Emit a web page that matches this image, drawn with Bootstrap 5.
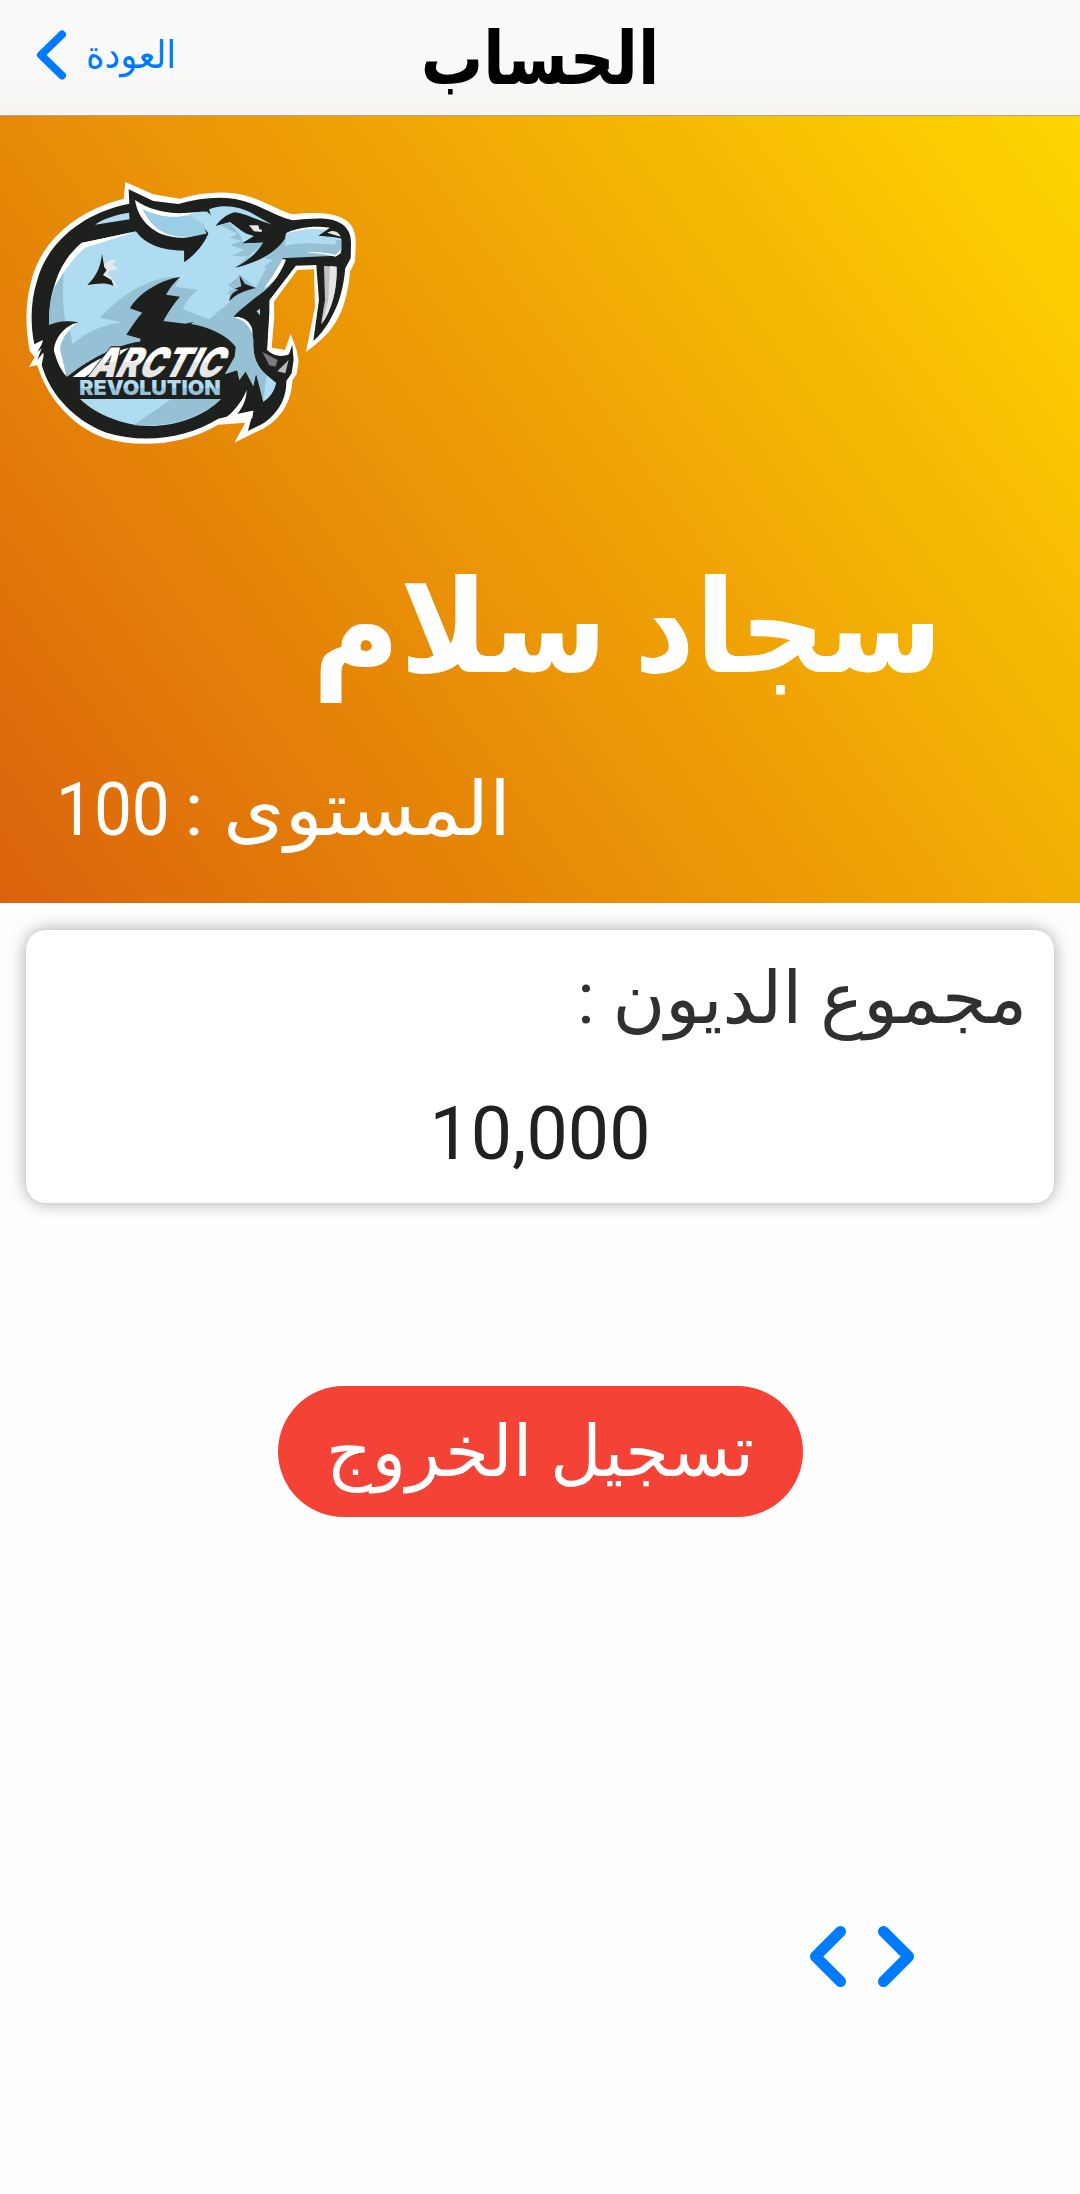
<!DOCTYPE html>
<html lang="ar">
<head>
<meta charset="utf-8">
<meta name="viewport" content="width=device-width, initial-scale=1">
<title>الحساب</title>
<link href="https://cdn.jsdelivr.net/npm/bootstrap@5.3.0/dist/css/bootstrap.min.css" rel="stylesheet">
<style>
body{font-family:Roboto,"DejaVu Sans",sans-serif;background:#fefefe;min-height:2194px}
.top-bar{height:116px;padding:0 36px;background:linear-gradient(#fafafa 50%,#f7f5f1);border-bottom:1px solid #a9a59c}
.back-link{color:#007aff;font-size:38px;line-height:60px;padding-bottom:6px;gap:20px}
.back-link span{font-family:"DejaVu Sans",sans-serif;transform:scaleX(.93);transform-origin:left}
.page-title{font:bold 74px/100px "DejaVu Sans",sans-serif;color:#000;transform:scaleX(.84)}
.hero{height:787px;padding-top:64px;background:linear-gradient(233.9deg,#ffd600,#db620c)}
.team-logo{width:331.3px;height:265px;margin-left:26px}
.user-name{font:bold 129px/150px "DejaVu Sans",sans-serif;word-spacing:-16px;transform:scaleX(.923);transform-origin:right;margin:107px 137px 57px 0}
.user-level{font-size:75px;line-height:100px;margin-left:56px;width:455px}
.level-word{transform:scaleX(1.05);transform-origin:right}
.level-value{transform:scaleX(.9);transform-origin:left}
.debt-card{margin:27px 26px 0;height:273px;padding:19px 27px 0;border-radius:20px;box-shadow:0 0 17px rgba(0,0,0,.34);gap:35px}
.debt-label{font-size:72px;line-height:100px;color:#303030}
.debt-sum{font-size:73.5px;line-height:100px;color:#212121}
.logout{margin-top:183px;width:525px;height:131px;font-size:71px;line-height:100px;background:#f44336;color:#fff}
.logout:hover{background:#e53935;color:#fff}
.arrows{margin-top:409px;padding-left:810px;gap:32px}
.chev{fill:none;stroke:#007aff;stroke-width:11;stroke-linecap:round;stroke-linejoin:round}
.back-link .chev{stroke-width:8}
</style>
</head>
<body>
<header class="top-bar d-flex align-items-center">
  <a href="#" class="back-link col d-flex align-items-center text-decoration-none">
    <svg width="30" height="50" viewBox="0 0 30 50"><path class="chev" d="M26 4.500 5 25 26 45.500"/></svg>
    <span dir="rtl">العودة</span>
  </a>
  <h1 class="page-title col-auto m-0" dir="rtl">الحساب</h1>
  <div class="col"></div>
</header>

<section class="hero d-flex flex-column text-white">
  <svg class="team-logo flex-shrink-0" viewBox="78 60 994 795" preserveAspectRatio="none" role="img" aria-label="Arctic Revolution">
    <!-- white outline -->
    <path fill="#fff" fill-rule="evenodd" d="M376 66 460 103 540 116C620 92 700 92 760 114 810 132 845 155 880 163 950 155 1010 158 1042 184 1062 200 1069 225 1067 262L1065 305 1050 335C1045 400 1030 450 1005 490 980 530 950 552 918 576L945 440 942 328 892 330 822 425 823 470 815 563 855 570 872 522 890 570 896 604 890 642 878 660C872 735 840 775 795 803L703 848 736 788 655 794C560 850 430 868 315 835 215 800 140 710 112 616L87 620 104 592 89 573C76 500 74 430 96 355 125 245 230 150 371 117Z"/>
    <!-- dark silhouette -->
    <path fill="#1e201d" d="M386 88 460 123 535 132C620 108 690 107 750 129 805 150 840 174 880 181 950 172 1000 172 1027 193 1050 210 1054 232 1053 260L1052 295 1036 325C1030 390 1015 435 995 470 980 500 960 525 940 543L957 420 949 315 887 317 808 420 808 460 801 570C820 588 845 592 867 583L877 555 881 600 875 640 859 663C860 720 830 765 785 793L744 813 760 752 690 768 655 776C560 835 430 852 320 818 230 785 152 710 125 615L134 572 112 600 125 565 112 577 134 537 103 553C90 490 92 420 112 360 140 255 240 160 388 131Z"/>
    <!-- body -->
    <path fill="#afdcf1" d="M408 214C440 260 500 272 553 272L553 306C590 280 610 250 625 220L610 200 632 164 622 150C660 130 720 137 760 162L817 194 760 186 706 158C680 165 660 180 648 197L690 186C710 200 725 215 742 222L762 228 727 250 792 247C775 280 745 305 706 322 760 310 810 285 835 258L858 220C890 205 940 198 985 206L957 227 1024 233 1024 270 1007 287C950 275 890 277 843 295L858 300C840 350 810 385 768 412L700 470C740 475 755 500 760 540 758 590 770 620 800 645L828 668C825 695 805 715 790 725L778 672 768 640 760 678 737 634 718 660 712 630 674 643 704 590 707 560 420 545 350 568 200 650C175 610 162 580 165 560 180 525 205 500 232 488 200 482 170 485 148 500 145 440 155 390 172 355 195 315 225 270 245 250Z"/>
    <path fill="#96c1d5" d="M192 337C185 400 190 450 197 484L148 500C145 440 157 375 192 337ZM165 560 210 510 217 553C260 515 310 495 363 487L300 473C350 420 420 365 505 352L540 351 525 380 592 389 563 420 548 448 628 478 690 425 688 390 768 384 800 320 785 324 820 300 792 295 820 278 858 220 855 258C900 245 950 250 1005 254L1010 240 1024 240 1024 270 1007 287 843 295 858 300C840 350 810 385 768 412L700 470C740 475 755 500 760 540 758 590 770 620 800 645L790 725 768 640 760 678 737 634 718 660 712 630 674 643 707 560 420 545 350 568 200 650Z"/>
    <path fill="#96c1d5" d="M660 194 690 190C710 215 730 230 727 250L792 250 706 322 765 290 695 288 732 270 690 255 725 243 688 233 712 222ZM684 375 722 346 768 384 688 424 710 405 680 400 704 390Z"/>
    <!-- ear and back highlights -->
    <path fill="#fff" d="M405 120C445 148 500 162 555 159L608 155 570 200 625 225C570 237 510 237 470 215 425 190 410 150 405 120ZM163 382C172 335 205 280 245 248L400 216 385 222 255 263C220 292 192 335 163 382Z"/>
    <path fill="#9ccde6" d="M428 147C475 172 530 176 567 164L622 150 632 164 612 200 620 222C560 236 510 234 474 207 450 188 435 165 428 147Z"/>
    <path fill="#afdcf1" d="m567 164 55-14 10 14-8 37ZM285 194C310 175 350 164 387 158L389 178Z"/>
    <path fill="#1e201d" d="M594 154 622 155 632 165 626 143ZM553 272 525 240 625 220C612 254 585 284 553 306Z"/>
    <!-- shoulder marks -->
    <path fill="#e7e8e8" d="M305 322 328 301 349 297 338 314 355 326 327 334 323 344C340 355 348 370 354 386L306 344 318 331Z"/>
    <path fill="#1e201d" d="M306 281 313 322 320 330 309 345 334 360 341 377C315 366 290 371 262 375 294 345 303 312 306 281ZM718 345 735 372 768 384C732 392 708 402 688 424 690 405 700 395 716 390L704 386 724 379Z"/>
    <path fill="#1e201d" d="M540 351C480 360 415 400 390 445L427 458C410 475 395 500 379 524L422 536 420 545C370 548 270 592 200 652L707 652 674 643 704 590 707 560C680 525 625 500 573 492L580 486 556 491 490 483C505 455 522 430 540 410L498 404C510 382 525 365 540 351Z"/>
    <!-- left tuft -->
    <path fill="#1e201d" d="M135 502C165 483 200 480 234 487 200 505 178 530 170 563L201 650 140 620 125 560Z"/>
    <path fill="#fff" d="M232 488C195 495 163 535 162 572 170 605 184 632 200 650L180 567C183 535 208 505 232 488Z"/>
    <!-- eye -->
    <path fill="#1e201d" d="M648 197C665 175 685 160 706 157 740 162 775 182 817 194L858 218 855 236C835 265 800 300 706 323 745 302 775 275 790 247L727 250 765 229C725 212 715 192 690 184Z"/>
    <path fill="#e7e8e8" d="M747 196 775 196 778 208 786 209 785 216 762 214Z"/>
    <!-- snout -->
    <path fill="#fff" d="M858 220C890 203 940 196 990 203L980 209C930 203 895 210 858 220ZM920 277C950 274 985 280 1007 284L1024 268 1022 280 1007 290 975 283Z"/>
    <path fill="#1e201d" d="M955 227 992 205 1025 215 1028 236 990 229Z"/>
    <path fill="#e7e8e8" d="M982 218C1000 208 1015 214 1022 230Z"/>
    <!-- tusk -->
    <path fill="#c0c0c0" d="M972 318 1010 320C1012 390 995 450 963 493L975 420Z"/>
    <path fill="#e5e5e5" d="M990 318 1010 320C1012 390 995 450 966 492L985 420Z"/>
    <!-- jaw -->
    <path fill="#fff" d="M858 300 848 298C830 330 812 358 792 386 828 362 848 332 858 300ZM700 470C735 480 750 500 758 524L757 500C746 478 722 466 700 470ZM740 690C725 730 690 770 655 787L757 775 760 752 712 762C730 740 740 715 740 690Z"/>
    <path fill="#1e201d" d="M858 300C838 350 810 385 768 412 740 435 720 450 700 470 745 468 762 500 762 540L801 570 808 420 887 317Z"/>
    <path fill="#afdcf1" d="M770 454 780 446 780 466ZM828 668C822 695 805 715 790 725L804 658Z"/>
    <path fill="#7b7b7b" d="M787 576 833 600 826 620 808 616Z"/>
    <path fill="#b9b9b9" d="M866 600 832 634 856 640Z"/>
    <!-- lower badge -->
    <path fill="#afdcf1" d="M240 717H663C610 770 530 798 450 798 370 797 290 765 240 717Z"/>
    <path fill="#96c1d5" d="M515 717H663C610 770 530 800 400 796Z"/>
    <path fill="#1e201d" d="M215 652H690V715H215Z"/>
    <linearGradient id="arcticFill" gradientUnits="userSpaceOnUse" x1="0" y1="-90" x2="0" y2="0"><stop offset=".5" stop-color="#fff"/><stop offset=".5" stop-color="#e7e7e7"/></linearGradient>
    <linearGradient id="revFill" gradientUnits="userSpaceOnUse" x1="0" y1="660" x2="0" y2="705"><stop offset=".55" stop-color="#afdcf1"/><stop offset=".55" stop-color="#96c1d5"/></linearGradient>
    <path fill="#fff" d="M218 651C262 613 320 580 388 563L350 592 254 651Z"/>
    <text transform="translate(262 651) skewX(-27)" font-family="Inter,sans-serif" font-weight="900" font-size="122" textLength="394" lengthAdjust="spacingAndGlyphs" fill="url(#arcticFill)" stroke="#1e201d" stroke-width="7" paint-order="stroke">ARCTIC</text>
    <text x="238" y="705" font-family="Inter,sans-serif" font-weight="900" font-size="61" textLength="424" lengthAdjust="spacingAndGlyphs" fill="url(#revFill)">REVOLUTION</text>
  </svg>
  <h2 class="user-name align-self-end" dir="rtl">سجاد سلام</h2>
  <div class="user-level d-flex justify-content-between" dir="rtl">
    <span class="level-word">المستوى :</span>
    <span class="level-value">100</span>
  </div>
</section>

<main class="d-flex flex-column">
  <div class="debt-card bg-white d-flex flex-column">
    <div class="debt-label" dir="rtl">مجموع الديون :</div>
    <div class="debt-sum text-center">10,000</div>
  </div>
  <button type="button" class="logout btn rounded-pill border-0 p-0 align-self-center" dir="rtl">تسجيل الخروج</button>
  <div class="arrows d-flex">
    <svg width="36" height="61" viewBox="0 0 36 61"><path class="chev" d="M30.500 5.500 5.500 30.500 30.500 55.500"/></svg>
    <svg width="36" height="61" viewBox="0 0 36 61"><path class="chev" d="M5.500 5.500 30.500 30.500 5.500 55.500"/></svg>
  </div>
</main>
<script src="https://cdn.jsdelivr.net/npm/bootstrap@5.3.0/dist/js/bootstrap.bundle.min.js"></script>
</body>
</html>
